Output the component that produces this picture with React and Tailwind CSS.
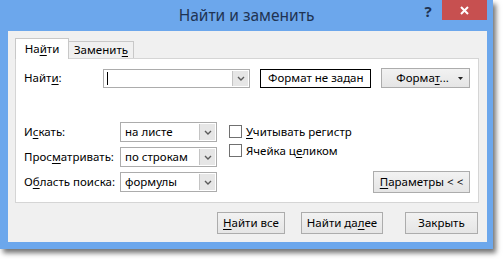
import React from 'react';

const U = ({ children }) => <span className="underline underline-offset-[2px] decoration-[1px]">{children}</span>;

const Chevron = () => (
    <svg width="8" height="5" viewBox="0 0 8 5">
        <path d="M1 1 L4 4 L7 1" fill="none" stroke="#5a5a5a" strokeWidth="1.4" />
    </svg>
);

const Combo = ({ value, className }) => (
    <div className={`flex h-[20px] bg-white border border-[#acacac] ${className}`}>
        <div className="flex-1 flex items-center pl-[4px] text-[11.5px] text-black">{value}</div>
        <div className="w-[16px] flex items-center justify-center bg-[#e6e6e6] border-l border-[#c4c4c4] m-px ml-0">
            <Chevron />
        </div>
    </div>
);

const Btn = ({ children, className = '' }) => (
    <div className={`flex items-center justify-center text-[11.5px] text-black border border-[#acacac] bg-gradient-to-b from-[#f2f2f2] to-[#e5e5e5] ${className}`}>
        {children}
    </div>
);

const CheckRow = ({ children }) => (
    <div className="flex items-center gap-[4px] h-[19px]">
        <div className="w-[13px] h-[13px] bg-white border border-[#707070]" />
        <span className="text-[11.5px] text-black">{children}</span>
    </div>
);

export default function App() {
    return (
        <div className="w-[503px] h-[259px] bg-white font-['Noto_Sans',sans-serif] overflow-hidden">
            <div className="w-[493px] h-[249px] bg-[#6ca7ec] flex flex-col shadow-[3px_4px_5px_rgba(0,0,0,0.55)]">
                {/* Title bar */}
                <div className="h-[31px] flex">
                    <div className="w-[74px]" />
                    <div className="flex-1 flex items-center justify-center pt-[1px] text-[15.5px] text-[#1f3352]">
                        Найти и заменить
                    </div>
                    <div className="w-[74px] flex items-start">
                        <div className="w-[18px] h-[22px] flex items-center justify-center font-bold text-[15px] text-[#1f3352]">?</div>
                        <div className="ml-[5px] w-[45px] h-[20px] bg-[#c75050] flex items-center justify-center">
                            <svg width="9" height="9" viewBox="0 0 9 9">
                                <path d="M1 1 L8 8 M8 1 L1 8" stroke="white" strokeWidth="2" />
                            </svg>
                        </div>
                    </div>
                </div>

                {/* Client area */}
                <div className="ml-[8px] w-[479px] h-[211px] bg-[#f0f0f0] pl-[7px] pt-[7px]">
                    {/* Tabs */}
                    <div className="flex items-end h-[20px]">
                        <div className="relative z-10 -mb-px w-[54px] h-[21px] bg-white border border-b-0 border-[#c8c8c8] flex items-center justify-center text-[11.5px] text-black">
                            На<U>й</U>ти
                        </div>
                        <div className="w-[65px] h-[17px] bg-[#f0f0f0] border border-l-0 border-b-0 border-[#c8c8c8] flex items-center justify-center text-[11.5px] text-black">
                            Заменит<U>ь</U>
                        </div>
                    </div>

                    {/* Panel */}
                    <div className="w-[464px] h-[145px] bg-white border border-[#d5d5d5] flex flex-col pl-[8px] pr-[8px] pt-[9px]">
                        <div className="flex items-center h-[20px]">
                            <div className="w-[79px] text-[11.5px] text-black">Найт<U>и</U>:</div>
                            <div className="w-[148px] h-[19px] flex bg-white border border-[#acacac]">
                                <div className="flex-1 flex items-center pl-[3px]">
                                    <div className="w-px h-[13px] bg-black" />
                                </div>
                                <div className="w-[16px] flex items-center justify-center bg-[#e6e6e6] border-l border-[#c4c4c4] m-px ml-0">
                                    <Chevron />
                                </div>
                            </div>
                            <div className="ml-[10px] w-[111px] h-[19px] border border-black flex items-center justify-center text-[11.5px] text-black">
                                Формат не задан
                            </div>
                            <Btn className="ml-[10px] w-[89px] h-[20px] relative">
                                <span className="-ml-[6px]">Форма<U>т</U>...</span>
                                <svg className="absolute right-[6px] top-[8px]" width="5" height="3" viewBox="0 0 5 3">
                                    <path d="M0 0 H5 L2.5 3 Z" fill="#222" />
                                </svg>
                            </Btn>
                        </div>

                        <div className="flex mt-[34px]">
                            <div className="flex flex-col gap-[5px]">
                                <div className="flex items-center">
                                    <div className="w-[96px] text-[11.5px] text-black">И<U>с</U>кать:</div>
                                    <Combo value="на листе" className="w-[97px]" />
                                </div>
                                <div className="flex items-center">
                                    <div className="w-[96px] text-[11.5px] text-black">Прос<U>м</U>атривать:</div>
                                    <Combo value="по строкам" className="w-[97px]" />
                                </div>
                                <div className="flex items-center">
                                    <div className="w-[96px] text-[11.5px] text-black">О<U>б</U>ласть поиска:</div>
                                    <Combo value="формулы" className="w-[97px]" />
                                </div>
                            </div>
                            <div className="ml-[12px] flex flex-col">
                                <CheckRow><U>У</U>читывать регистр</CheckRow>
                                <CheckRow>Ячейка ц<U>е</U>ликом</CheckRow>
                            </div>
                            <div className="flex-1 flex justify-end items-end">
                                <Btn className="w-[97px] h-[22px] -mb-[1px]">
                                    <U>П</U>араметры &lt; &lt;
                                </Btn>
                            </div>
                        </div>
                    </div>

                    {/* Bottom buttons */}
                    <div className="flex justify-end pr-[9px] mt-[9px] gap-[16px]">
                        <Btn className="w-[68px] h-[22px]"><U>Н</U>айти все</Btn>
                        <Btn className="w-[82px] h-[22px] border-[#3c7fb1] from-[#eaf3fb] to-[#dcecfc]">Найти да<U>л</U>ее</Btn>
                        <Btn className="ml-[6px] w-[73px] h-[22px]">Закрыть</Btn>
                    </div>
                </div>
            </div>
        </div>
    );
}
